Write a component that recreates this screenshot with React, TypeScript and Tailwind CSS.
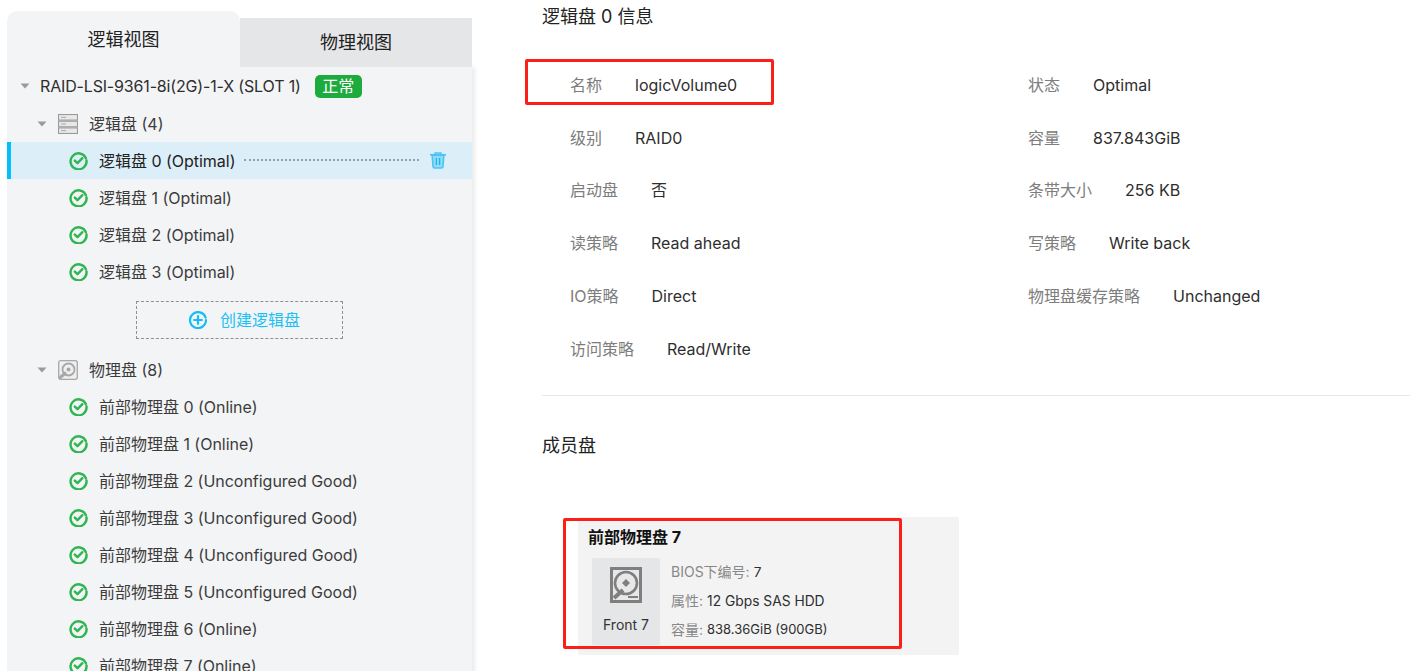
import React from "react";

const FONT = "font-['Inter','Noto_Sans_CJK_SC',sans-serif]";

function Caret({ className = "" }: { className?: string }) {
  return (
    <svg width="10" height="6" viewBox="0 0 10 6" className={className}>
      <path d="M0.5 0.5H9.5L5 5.5Z" fill="#9a9a9a" />
    </svg>
  );
}

function Check() {
  return (
    <svg width="19" height="19" viewBox="0 0 19 19" className="shrink-0">
      <path d="M16.9 7.2A8 8 0 1 0 17.5 9.5" fill="none" stroke="#2fb552" strokeWidth="2.4" strokeLinecap="round" />
      <path d="M5.8 9.6L8.5 12.2L13.4 7.2" fill="none" stroke="#2fb552" strokeWidth="2.4" strokeLinecap="round" strokeLinejoin="round" />
    </svg>
  );
}

function TreeLeaf({ label, active = false }: { label: string; active?: boolean }) {
  return (
    <div className={`flex h-[37px] items-center ${active ? "border-l-4 border-[#00bfff] bg-[#dceef8] pl-[58px]" : "pl-[62px]"}`}>
      <Check />
      <span className={`ml-[11px] text-[16px] tracking-[-0.02px] whitespace-nowrap ${active ? "text-[#222]" : "text-[#3c3c3c]"}`}>{label}</span>
      {active && (
        <>
          <div className="ml-[9px] -mt-[1px] w-[175px] border-t-2 border-dotted border-[#9a9ea2]" />
          <svg width="16" height="17" viewBox="0 0 16 17" className="ml-[11px]">
            <path d="M0 2.8H16" stroke="#4fc4f4" strokeWidth="1.8" />
            <path d="M5 2.5V1H11V2.5" fill="none" stroke="#4fc4f4" strokeWidth="1.4" />
            <path d="M2.2 3.2H13.8L13 14.5Q12.9 16 11.4 16H4.6Q3.1 16 3 14.5Z" fill="#8fdcf8" stroke="#4fc4f4" strokeWidth="1.6" />
            <path d="M6.4 6V13M9.6 6V13" stroke="#18b5ef" strokeWidth="1.3" />
          </svg>
        </>
      )}
    </div>
  );
}

function InfoRow({ label, value }: { label: string; value: string }) {
  return (
    <div className="flex h-[52.8px] items-center pl-[28px] text-[16px]">
      <span className="mr-[33px] whitespace-nowrap text-[#7d7d7d]">{label}</span>
      <span className="whitespace-nowrap text-[#2e2e2e]">{value}</span>
    </div>
  );
}

const logical = ["逻辑盘 0 (Optimal)", "逻辑盘 1 (Optimal)", "逻辑盘 2 (Optimal)", "逻辑盘 3 (Optimal)"];
const physical = [
  "前部物理盘 0 (Online)",
  "前部物理盘 1 (Online)",
  "前部物理盘 2 (Unconfigured Good)",
  "前部物理盘 3 (Unconfigured Good)",
  "前部物理盘 4 (Unconfigured Good)",
  "前部物理盘 5 (Unconfigured Good)",
  "前部物理盘 6 (Online)",
  "前部物理盘 7 (Online)",
];

export default function App() {
  return (
    <div className={`relative flex h-[671px] w-[1410px] overflow-hidden bg-white ${FONT}`}>
      {/* left panel */}
      <div className="ml-[7px] mt-[11px] h-[700px] w-[465px] shrink-0">
        <div className="flex h-[56px] items-end">
          <div className="flex h-[56px] w-[233px] items-center justify-center rounded-t-[10px] bg-[#f3f4f6] text-[18px] text-[#222]">
            逻辑视图
          </div>
          <div className="flex h-[49px] w-[232px] items-center justify-center bg-[#e5e6e8] text-[18px] text-[#222]">
            物理视图
          </div>
        </div>
        <div className="h-[650px] bg-[#f3f4f6] shadow-[3px_0_4px_rgba(0,0,0,0.08)]">
          <div className="flex h-[38px] items-center pl-[13px]">
            <Caret />
            <span className="ml-[10px] text-[16px] tracking-[-0.16px] whitespace-nowrap text-[#2e2e2e]">RAID-LSI-9361-8i(2G)-1-X (SLOT 1)</span>
            <span className="ml-[14px] flex h-[23px] w-[47px] items-center justify-center rounded-[5px] bg-[#1eab3e] text-[16px] text-white">正常</span>
          </div>
          <div className="flex h-[37px] items-center pl-[30px]">
            <Caret />
            <svg width="20" height="20" viewBox="0 0 20 20" className="ml-[11px]">
              <g fill="#e8e8e8" stroke="#9a9a9a" strokeWidth="1.1">
                <rect x="0.5" y="0.5" width="19" height="5.6" />
                <rect x="0.5" y="7.2" width="19" height="5.6" />
                <rect x="0.5" y="13.9" width="19" height="5.6" />
              </g>
              <path d="M3 3.3H8M3 10H8M3 16.7H8" stroke="#aaaaaa" />
            </svg>
            <span className="ml-[11px] mt-[1px] text-[16px] text-[#3c3c3c]">逻辑盘 (4)</span>
          </div>
          {logical.map((l, i) => (
            <TreeLeaf key={l} label={l} active={i === 0} />
          ))}
          <div className="flex h-[61px] items-center pb-[1px] pl-[129px]">
            <button className="flex h-[38px] w-[207px] items-center justify-center border border-dashed border-[#8f8f8f] pl-[10px] text-[16px] text-[#1cc1f5]">
              <svg width="18" height="18" viewBox="0 0 18 18">
                <path d="M16.6 6.6A8 8 0 1 0 17 9" fill="none" stroke="#15bdf4" strokeWidth="2.2" strokeLinecap="round" />
                <path d="M5.2 9H12.8M9 5.2V12.8" stroke="#15bdf4" strokeWidth="2.2" strokeLinecap="round" />
              </svg>
              <span className="ml-[13px]">创建逻辑盘</span>
            </button>
          </div>
          <div className="flex h-[37px] items-center pl-[30px]">
            <Caret />
            <svg width="20" height="20" viewBox="0 0 20 20" className="ml-[11px]">
              <rect x="0.7" y="0.7" width="18.6" height="18.6" rx="2" fill="#efefef" stroke="#a8a8a8" strokeWidth="1.3" />
              <circle cx="10.5" cy="9.5" r="6" fill="none" stroke="#a8a8a8" strokeWidth="1.8" />
              <circle cx="10.5" cy="9.5" r="2" fill="#a8a8a8" />
              <path d="M1 18.5L8 12.5" stroke="#a8a8a8" strokeWidth="3" />
            </svg>
            <span className="ml-[11px] text-[16px] text-[#3c3c3c]">物理盘 (8)</span>
          </div>
          {physical.map((l) => (
            <TreeLeaf key={l} label={l} />
          ))}
        </div>
      </div>

      {/* right content */}
      <div className="ml-[70px] min-w-0 flex-1">
        <h2 className="flex h-[33px] items-center text-[18px] font-normal text-[#222]">逻辑盘 0 信息</h2>
        <div className="mt-[25.45px] grid grid-cols-[458px_1fr]">
          <InfoRow label="名称" value="logicVolume0" />
          <InfoRow label="状态" value="Optimal" />
          <InfoRow label="级别" value="RAID0" />
          <InfoRow label="容量" value="837.843GiB" />
          <InfoRow label="启动盘" value="否" />
          <InfoRow label="条带大小" value="256 KB" />
          <InfoRow label="读策略" value="Read ahead" />
          <InfoRow label="写策略" value="Write back" />
          <InfoRow label="IO策略" value="Direct" />
          <InfoRow label="物理盘缓存策略" value="Unchanged" />
          <InfoRow label="访问策略" value="Read/Write" />
        </div>
        <div className="mt-[20.15px] border-t border-[#e8e8e8]" />
        <h3 className="mt-[38px] text-[18px] leading-[24px] font-normal text-[#222]">成员盘</h3>
        <div className="ml-[36px] mt-[59px] h-[138px] w-[381px] rounded-[2px] bg-[#f3f3f3] pl-[10px] pt-[8px]">
          <div className="text-[16px] font-bold leading-[24px] text-[#111]">前部物理盘 7</div>
          <div className="mt-[9px] flex">
            <div className="ml-[4px] flex h-[87px] w-[68px] flex-col items-center rounded-[2px] bg-[#e5e6e8]">
              <svg width="32" height="36" viewBox="0 0 32 36" className="mt-[9px]">
                <rect x="1.5" y="1.5" width="29" height="33" fill="#e8e8e8" stroke="#7f7f7f" strokeWidth="3" />
                <circle cx="16" cy="16" r="11" fill="none" stroke="#7f7f7f" strokeWidth="2.6" />
                <path d="M16 12L20 16L16 20L12 16Z" fill="#7f7f7f" />
                <path d="M4 31L13 23" stroke="#7f7f7f" strokeWidth="4" />
                <path d="M18 30H28" stroke="#7f7f7f" strokeWidth="2" />
              </svg>
              <span className="mt-[10px] text-[14px] leading-[24px] text-[#333]">Front 7</span>
            </div>
            <div className="ml-[11px] -mt-[1px] text-[14px] text-[#2e2e2e]">
              <div className="flex h-[29px] items-center"><span className="text-[#888]">BIOS下编号:</span><span className="ml-1 text-[13.6px]">7</span></div>
              <div className="flex h-[29px] items-center"><span className="text-[#888]">属性:</span><span className="ml-1 text-[13.8px]">12 Gbps SAS HDD</span></div>
              <div className="flex h-[29px] items-center"><span className="text-[#888]">容量:</span><span className="ml-1 text-[13px]">838.36GiB (900GB)</span></div>
            </div>
          </div>
        </div>
      </div>

      {/* red annotation boxes */}
      <div className="absolute left-[525px] top-[59px] h-[46px] w-[249px] rounded-[2px] border-[3px] border-[#fa2019]" />
      <div className="absolute left-[563px] top-[518px] h-[131px] w-[339px] rounded-[2px] border-[3px] border-[#fa2019]" />
    </div>
  );
}
